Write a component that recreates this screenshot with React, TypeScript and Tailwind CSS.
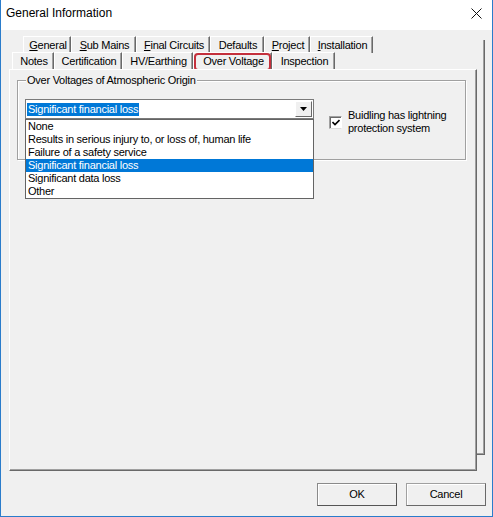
import React from 'react';

type Tab = { label: string; mnemonic?: boolean; w: number };

const backTabs: Tab[] = [
  { label: 'General', mnemonic: true, w: 48 },
  { label: 'Sub Mains', mnemonic: true, w: 65 },
  { label: 'Final Circuits', mnemonic: true, w: 74 },
  { label: 'Defaults', w: 54 },
  { label: 'Project', mnemonic: true, w: 46 },
  { label: 'Installation', mnemonic: true, w: 63 },
];

const frontTabs: Tab[] = [
  { label: 'Notes', w: 42 },
  { label: 'Certification', w: 68 },
  { label: 'HV/Earthing', w: 71 },
  { label: 'Over Voltage', w: 79 },
  { label: 'Inspection', w: 63 },
];

const options = [
  'None',
  'Results in serious injury to, or loss of, human life',
  'Failure of a safety service',
  'Significant financial loss',
  'Significant data loss',
  'Other',
];

const TabLabel: React.FC<{ tab: Tab }> = ({ tab }) =>
  tab.mnemonic ? (
    <span>
      <span className="underline underline-offset-[1px]">{tab.label[0]}</span>
      {tab.label.slice(1)}
    </span>
  ) : (
    <span>{tab.label}</span>
  );

const TabRow: React.FC<{ tabs: Tab[]; selected?: string }> = ({ tabs, selected }) => (
  <div className="flex h-[17px]">
    {tabs.map((tab) => (
      <div
        key={tab.label}
        style={{ width: tab.w }}
        className="relative flex items-center justify-center pl-[2px] border-t border-l border-white border-r border-r-[#696969] shadow-[inset_-1px_0_0_#a0a0a0]"
      >
        {selected === tab.label && (
          <span className="absolute inset-x-0 top-0 h-[18px] rounded-[4px] border-2 border-[#c4303c]" />
        )}
        <TabLabel tab={tab} />
      </div>
    ))}
  </div>
);

export default function App() {
  const selected = 'Significant financial loss';

  return (
    <div className="w-[493px] h-[517px] flex flex-col bg-[#f0f0f0] border-x border-b border-[#2a7ccb] font-['Liberation_Sans',Arial,sans-serif] text-[11px] leading-[13px] tracking-[-0.25px] text-black select-none">
      {/* title bar */}
      <div className="h-[30px] shrink-0 bg-white flex items-center justify-between pl-[5px] pr-[10px] pb-[4px]">
        <span className="text-[12px] tracking-normal">General Information</span>
        <svg width="11" height="11" viewBox="0 0 11 11" className="mt-[1px]">
          <path d="M0.5 0.5 L10.5 10.5 M10.5 0.5 L0.5 10.5" stroke="#111" strokeWidth="1" />
        </svg>
      </div>

      <div className="relative flex-1 flex flex-col">
        {/* edge of the page behind */}
        <div className="absolute left-[390px] top-[10px] w-[94px] h-[415px] border-r border-b border-[#696969] shadow-[inset_-1px_-1px_0_#a0a0a0]" />

        <div className="mt-[6px] pl-[22px]">
          <TabRow tabs={backTabs} />
        </div>
        <div className="pl-[11px] -mt-[1px]">
          <TabRow tabs={frontTabs} selected="Over Voltage" />
        </div>

        <div className="relative ml-[8px] w-[468px] h-[402px] bg-[#f0f0f0] border-t border-l border-white border-r border-b border-r-[#696969] border-b-[#696969] shadow-[inset_-1px_-1px_0_#a0a0a0]">
          <fieldset className="relative ml-[7px] mt-[4px] w-[449px] h-[86px] border border-[#a0a0a0] shadow-[inset_1px_1px_0_#fff,1px_1px_0_#fff]">
            <legend className="ml-[8px] px-[1px] bg-[#f0f0f0]">Over Voltages of Atmospheric Origin</legend>

            <div className="flex items-start ml-[7px] mt-[12px]">
              <div className="relative w-[289px] h-[20px] shrink-0 bg-white border border-[#7a7a7a] flex items-center">
                <span className="ml-[1px] px-[1px] bg-[#0078d7] text-white">{selected}</span>
                <div className="absolute right-[1px] top-[1px] bottom-[1px] w-[17px] bg-[#f0f0f0] border-t border-l border-white border-r border-b border-r-[#696969] border-b-[#696969] flex items-center justify-center">
                  <svg width="7" height="4" viewBox="0 0 7 4">
                    <path d="M0 0 H7 L3.5 4 Z" fill="#000" />
                  </svg>
                </div>

                {/* open list */}
                <div className="absolute left-[-1px] top-[19px] w-[289px] z-10 bg-white border border-[#646464]">
                  {options.map((o) => (
                    <div
                      key={o}
                      className={`h-[13px] pl-[2px] flex items-center whitespace-nowrap ${
                        o === selected ? 'bg-[#0078d7] text-white' : ''
                      }`}
                    >
                      {o}
                    </div>
                  ))}
                </div>
              </div>

              <div className="flex items-center gap-[6px] ml-[15px] mt-[10px]">
                <div className="w-[13px] h-[13px] shrink-0 bg-white border-t border-l border-[#a0a0a0] border-r border-b border-r-white border-b-[#dcdcdc] shadow-[inset_1px_1px_0_#696969] flex items-center justify-center">
                  <svg width="8" height="7" viewBox="0 0 8 7">
                    <path d="M0.5 3 L3 5.5 L7.5 1" stroke="#000" strokeWidth="1.6" fill="none" />
                  </svg>
                </div>
                <span>
                  Buidling has lightning
                  <br />
                  protection system
                </span>
              </div>
            </div>
          </fieldset>
        </div>

        <div className="flex justify-end gap-[9px] pr-[6px] mt-[12px]">
          <button className="w-[80px] h-[23px] bg-[#f0f0f0] border border-[#8a8a8a] border-r-[#555] border-b-[#555] shadow-[inset_1px_1px_0_#fff]">
            OK
          </button>
          <button className="w-[80px] h-[23px] bg-[#f0f0f0] border border-[#a0a0a0] border-r-[#696969] border-b-[#696969] shadow-[inset_1px_1px_0_#fff]">
            Cancel
          </button>
        </div>
      </div>
    </div>
  );
}
